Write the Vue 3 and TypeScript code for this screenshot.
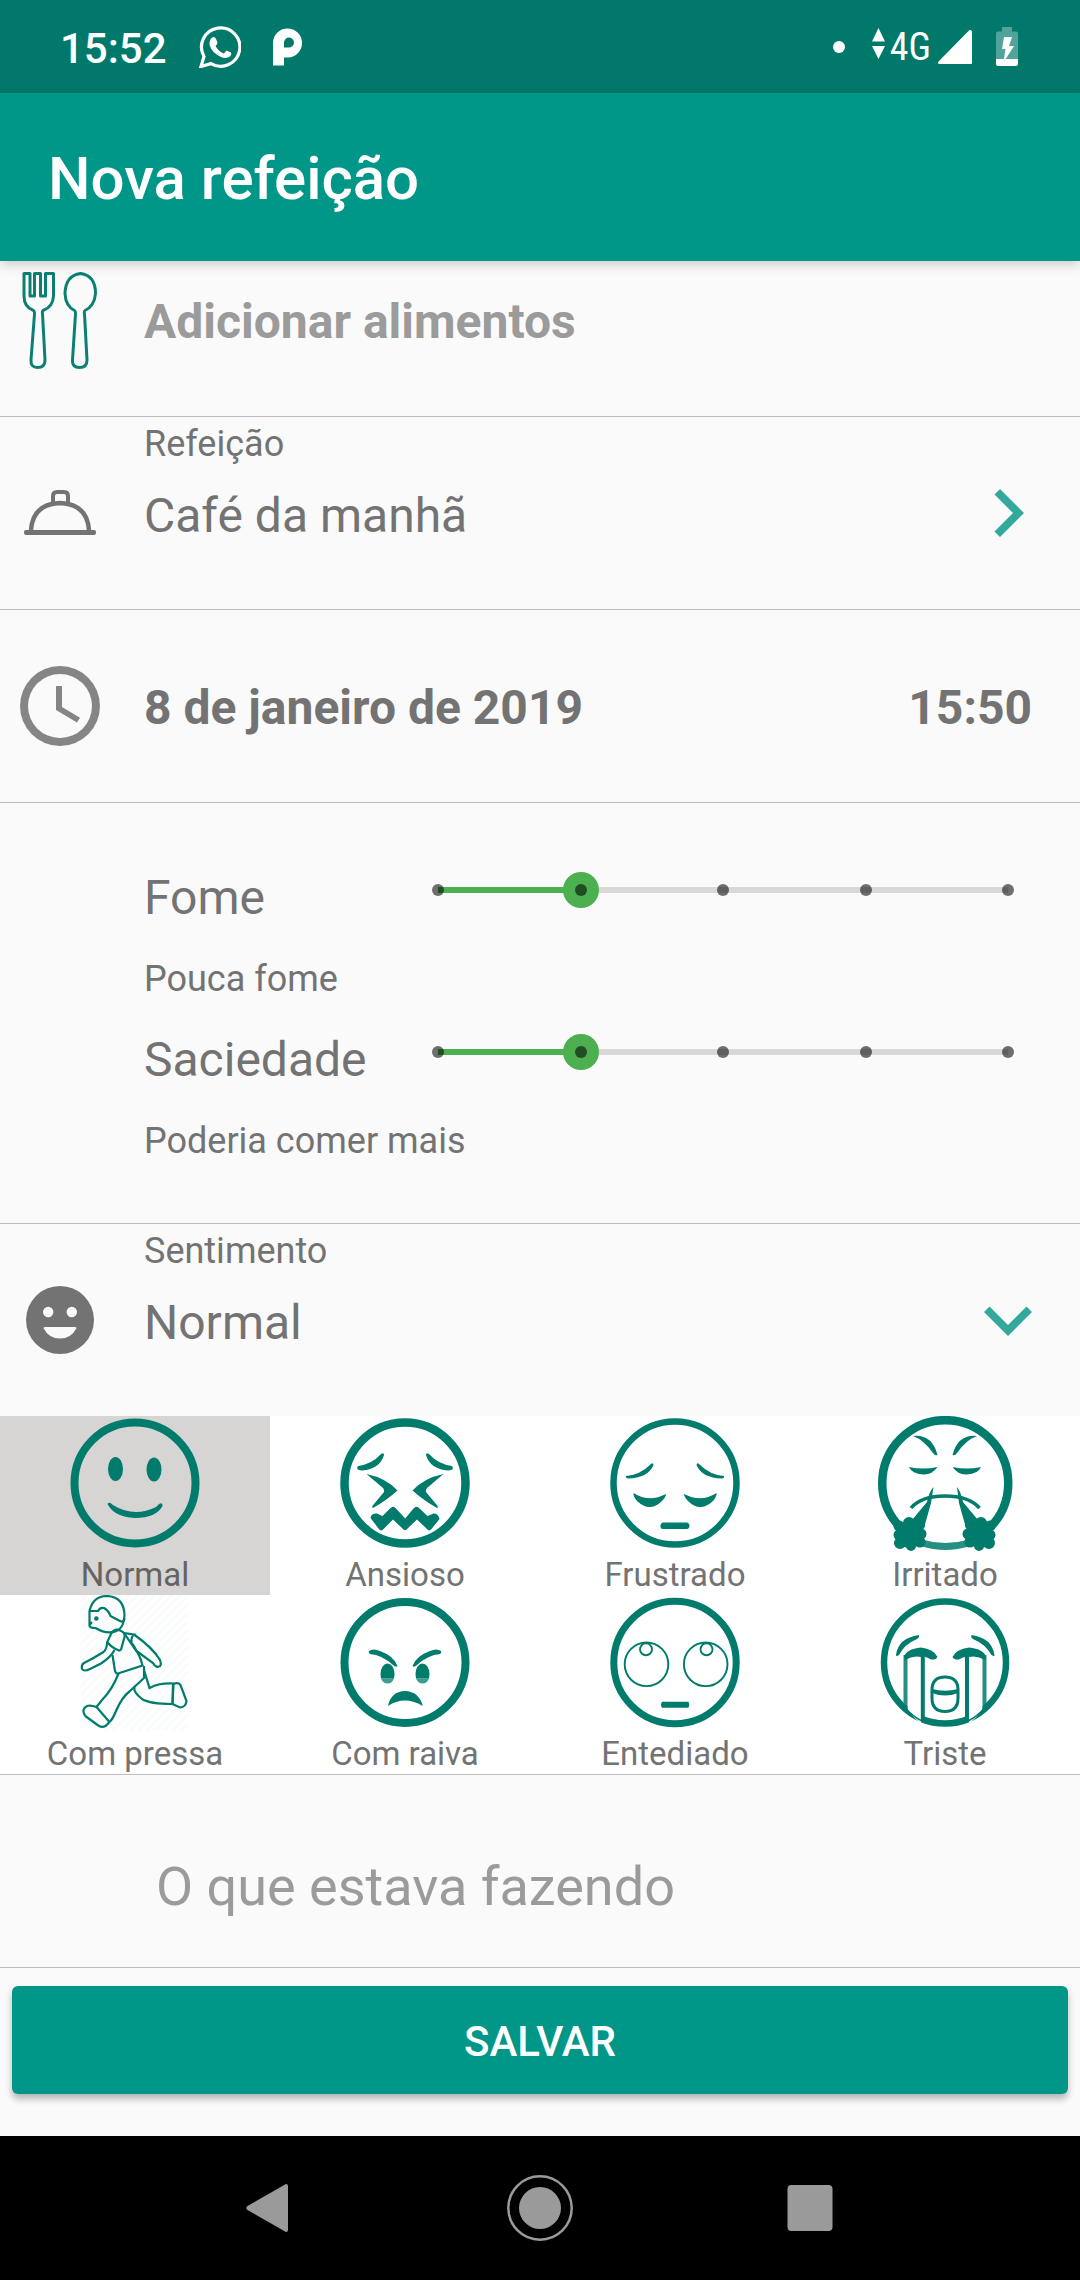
<script setup lang="ts">
import { computed, ref } from 'vue'

interface Shape {
  d: string
  /** Stroke width; the shape is filled when it is left out. */
  w?: number
  color?: string
  opacity?: number
}

interface Mood {
  id: string
  label: string
  hatched?: boolean
  shapes: Shape[]
}

const oval = (cx: number, cy: number, rx: number, ry: number = rx): string =>
  `M${cx - rx} ${cy}a${rx} ${ry} 0 1 0 ${2 * rx} 0a${rx} ${ry} 0 1 0 ${-2 * rx} 0Z`

const moods: Mood[] = [
  {
    id: 'normal',
    label: 'Normal',
    shapes: [
      { d: oval(67, 67, 60.5), w: 8 },
      { d: oval(47.5, 53, 7.5, 12) },
      { d: oval(86, 53.5, 7.5, 12) },
      { d: 'M39.5 88Q41 85 45 89Q66 102 88 91L91 88Q95 86 94.5 90Q88 102 67 102Q46 101 39.5 88Z' },
    ],
  },
  {
    id: 'ansioso',
    label: 'Ansioso',
    shapes: [
      { d: oval(67, 67, 60.5), w: 8.5 },
      { d: 'M20 50Q34 48 43 38Q46 36 46 39Q42 53 24 54.5Q17 54 20 50Z' },
      { d: 'M114 50Q100 48 91 38Q88 36 88 39Q92 53 110 54.5Q117 54 114 50Z' },
      { d: 'M28.5 58Q48 62 59.5 74.5Q49 84 35 92Q33 91 36 88L46 76Q47 74.5 45 72Z' },
      { d: 'M105.5 58Q86 62 74.5 74.5Q85 84 99 92Q101 91 98 88L88 76Q87 74.5 89 72Z' },
      { d: 'M32.5 102Q33 97 39 97.5L44.5 100L52 92.5Q55 89 58 92.5L67.2 102.5L75.5 92.5Q78.500 89 82 93L89.5 100L95.5 97.5Q100 97 101.500 103L93.5 113Q91 116 88.5 112.5L79 103.5L69.5 112.5Q67 116 64.5 112.5L55 103.5L45.5 113Q43 116 40.5 112.5Z' },
    ],
  },
  {
    id: 'frustrado',
    label: 'Frustrado',
    shapes: [
      { d: oval(67, 67, 61.5), w: 6.5 },
      { d: 'M18 60Q32 59 43 48Q45 46 45.500 49Q40 62 20 62.5Q17 61.500 18 60Z' },
      { d: 'M116 60Q102 59 91 48Q89 46 88.500 49Q94 62 114 62.5Q117 61.500 116 60Z' },
      { d: 'M25.5 77Q41 87 58 78Q58 81 54 85Q42 97 29 85Q25 80 25.5 77Z' },
      { d: 'M108.5 77Q93 87 76 78Q76 81 80 85Q92 97 105 85Q109 80 108.5 77Z' },
      { d: 'M55 106.5H79Q81.5 107 81.5 110Q81 113 79 113H55Q52 113 52.5 110Q52.5 107 55 106.5Z' },
    ],
  },
  {
    id: 'irritado',
    label: 'Irritado',
    shapes: [
      { d: 'M22.5 111.5A63 63 0 1 1 112 111.5', w: 8.5 },
      { d: 'M44 127Q67 134 91 127', w: 7, opacity: 0.85 },
      { d: 'M35 20Q54 18 59.5 39Q57 40 55 37Q46 24 35 20Z' },
      { d: 'M99 20Q80 18 74.5 39Q77 40 79 37Q88 24 99 20Z' },
      { d: 'M31 51Q45 54 59.5 51Q54 59 45 58.5Q34 58 31 51Z' },
      { d: 'M103 51Q89 54 74.5 51Q80 59 89 58.5Q100 58 103 51Z' },
      { d: 'M33 92Q43 80 67 80Q91 80 101.5 92', w: 3.5 },
      { d: 'M55.5 71Q51 76 49 86L34 104L46 112L53 87Z' },
      { d: 'M79 71Q83 76 85 86L100 104L88 112L81 87Z' },
      { d: oval(32, 119, 14, 13) + oval(31, 107, 6) + oval(41, 109, 6) + oval(21, 110, 5.5) + oval(21, 119, 5.5) + oval(22, 127, 6) + oval(33, 130, 5) + oval(42, 126, 5.5) + oval(43, 118, 5.5) },
      { d: oval(102, 119, 14, 13) + oval(103, 107, 6) + oval(93, 109, 6) + oval(112, 110, 5.5) + oval(112, 119, 5.5) + oval(111, 127, 6) + oval(101, 130, 5) + oval(92, 126, 5.5) + oval(90, 118, 5.5) },
    ],
  },
  {
    id: 'pressa',
    label: 'Com pressa',
    hatched: true,
    shapes: [
      { d: 'M21.5 30L21.5 16Q25 1 39 1Q56 2 56.5 20Q56 33 48.5 36Q39 40 27.5 33Q21 33 21.5 30L24 27', w: 2.2 },
      { d: 'M21.5 16H30Q32 12 36 13Q41 16 42.5 21Q48 24 53 26.5Q56 27 56.5 23', w: 2.2 },
      { d: oval(28.3, 23.5, 2.3) },
      { d: 'M43.5 38Q47 33 52 35.5Q58 38 56.5 42L54 51Q53 56 51 55.5Q44 53 39.2 47Z', w: 2.2 },
      { d: 'M39.2 47Q39 54 35.5 57Q26 63 16 68Q13 70 14 74Q16 77 22 74L33 68.5Q43 62 46.5 55', w: 2.2 },
      { d: 'M44.5 60L46.5 73Q47 79 50 78.5L74.5 70.5Q72 60 67 54L56 38Q62 39 66 39.5Q63 42 63.5 47', w: 2.2 },
      { d: 'M66 39.5Q85 53 92 65Q94 71 91 71.5Q88 73 85 68L68.5 56Q66 50 62 46', w: 2.2 },
      { d: 'M50.6 78.5Q44 95 34 105L28.5 112Q18 108 15.5 115Q15 120 20 123L31 131Q36 134 41 127.5Q45 124 48 116Q54 102 62 96L76 83V71', w: 2.2 },
      { d: 'M28.5 112L41 126.5', w: 2.2 },
      { d: 'M76 75L81.5 93Q90 88 105 88.5L104.5 109Q82 109 74 104Q65 97 66.5 92', w: 2.2 },
      { d: 'M105.5 89Q110 87 112.5 90L118.500 106Q118 112 112 112.5L104.5 109Z', w: 2.2 },
    ],
  },
  {
    id: 'raiva',
    label: 'Com raiva',
    shapes: [
      { d: oval(67, 67.5, 60.5), w: 8 },
      { d: 'M31 56Q35 53 42 56Q56 61 59.5 71Q58 73 55 70Q44 60 32 59Q30 58 31 56Z' },
      { d: 'M103 56Q99 53 92 56Q78 61 74.5 71Q76 73 79 70Q90 60 102 59Q104 58 103 56Z' },
      { d: 'M42.5 79A7 10.5 0 0 1 56.5 79L56 83.500H43Z' },
      { d: 'M77.5 79A7 10.5 0 0 1 91.5 79L91 83.500H78Z' },
      { d: 'M43 83.5H56Q54 88.5 49.5 88.5Q45 88.5 43 83.5Z', opacity: 0.75 },
      { d: 'M78 83.5H91Q89 88.5 84.5 88.5Q80 88.5 78 83.5Z', opacity: 0.75 },
      { d: 'M50 111Q53 96.5 67 96Q81 96.5 84.7 111Q76 105.5 67 105.5Q58 105.5 50 111Z' },
    ],
  },
  {
    id: 'entediado',
    label: 'Entediado',
    shapes: [
      { d: oval(67, 67.5, 61.2), w: 7 },
      { d: oval(38.5, 69.3, 21.8), w: 1.9 },
      { d: oval(97.7, 69.3, 21.8), w: 1.9 },
      { d: oval(38, 54.3, 6), w: 1.9 },
      { d: oval(98.5, 54.3, 6), w: 1.9 },
      { d: 'M54 106.7H80.5Q82 110 80.5 112.7H54Q52 110 54 106.7Z' },
    ],
  },
  {
    id: 'triste',
    label: 'Triste',
    shapes: [
      { d: oval(67, 67.5, 61), w: 6.5 },
      { d: 'M29.5 64H43V128Q34 122 29.5 114Z', color: '#fff' },
      { d: 'M104.5 64H91V128Q100 122 104.5 114Z', color: '#fff' },
      { d: 'M27.5 113Q34 121 44 126M106.5 113Q100 121 90 126', w: 1.5 },
      { d: 'M27.5 60V115M106.5 60V115', w: 4, opacity: 0.85 },
      { d: 'M44.8 60V124M89 60V124', w: 4 },
      { d: 'M18 60Q20 43 41 40Q42 43 37 45Q27 49 21 60Q18 62 18 60Z' },
      { d: 'M116.5 60Q114 43 93.5 40Q92 43 97 45Q107 49 113.5 60Q117 62 116.5 60Z' },
      { d: 'M26 62Q28 54 43 52.500Q56 54 59.5 62Q58 65 53 64.5Q48 61 43 62Q35 60 27 65Z' },
      { d: 'M108 62Q106 54 91 52.500Q78 54 74.5 62Q76 65 81 64.5Q86 61 91 62Q99 60 107 65Z' },
      { d: 'M54 95Q54 82 67 82Q80 82 80 95V103Q80 116.5 67 116.5Q54 116.5 54 103Z', w: 3 },
      { d: 'M54 94Q67 97.5 80 94V98Q67 103 54 98Z' },
    ],
  },
]

const hungerNotes = ['Sem fome', 'Pouca fome', 'Com fome', 'Muita fome', 'Faminto']
const fullnessNotes = ['Insatisfeito', 'Poderia comer mais', 'Satisfeito', 'Cheio', 'Muito cheio']

const hunger = ref(1)
const fullness = ref(1)
const mood = ref('normal')
const moodsOpen = ref(true)
const activity = ref('')

const moodLabel = computed(() => moods.find((m) => m.id === mood.value)?.label ?? '')
</script>

<template>
  <div class="screen">
    <div class="status">
      <span class="clock">15:52</span>
      <svg width="42" height="42" viewBox="0 0 42 42" aria-hidden="true">
        <path d="M2 40.5L5 30.5A19.2 19.2 0 1 1 12 37.6Z" fill="none" stroke="#fff" stroke-width="3.2" />
        <path d="M14 11Q16 10.5 17 13L18.5 16.5Q18.5 18 16.5 20Q20 26 25 27.5L27.5 24.5L32 26.5Q33 28 31 30.5Q27 33 22 31Q13 27 10.5 19Q10 13 14 11Z" fill="#fff" />
      </svg>
      <svg width="30" height="38" viewBox="0 0 30 38" aria-hidden="true">
        <path fill-rule="evenodd" d="M0 37.5V15A14.5 14.5 0 1 1 15 29.5H11V37.5ZM11 19.5V14.500A5 5 0 1 1 15.5 19.5Z" fill="#fff" />
      </svg>
      <div class="status-end">
        <svg width="12" height="12" viewBox="0 0 12 12" aria-hidden="true"><circle cx="6" cy="6" r="6" fill="#fff" /></svg>
        <svg class="arrows" width="13" height="31" viewBox="0 0 13 31" aria-hidden="true"><path d="M6.5 0L13 13.500H0ZM0 18H13L6.5 31Z" fill="#fff" /></svg>
        <span class="network">4G</span>
        <svg class="signal" width="34" height="34" viewBox="0 0 34 34" aria-hidden="true"><path d="M32 0Q34 0 34 2V33Q34 34 33 34H1Q-1 33 1 31L30.5 1Q31 0 32 0Z" fill="#fff" /></svg>
        <svg width="22" height="39" viewBox="0 0 22 39" aria-hidden="true">
          <path d="M6 0H16V4.5H20Q22 4.5 22 6.5V32H0V6.5Q0 4.5 2 4.5H6Z" fill="#fff" opacity=".32" />
          <path d="M0 32H22V37Q22 39 20 39H2Q0 39 0 37ZM8 10H16L13 19H18L9 33L8 32L9.5 22H6Z" fill="#fff" />
        </svg>
      </div>
    </div>

    <header class="app-bar"><h1>Nova refeição</h1></header>

    <main>
      <button type="button" class="row foods">
        <span class="icon">
          <svg width="76" height="98" viewBox="0 0 76 98" fill="none" stroke="#0b8072" stroke-width="3" stroke-linejoin="round" aria-hidden="true">
            <path d="M2 1.5H8V24H12.500V1.5H18.500V24H23.500V1.5H31.500V24Q31 35 21 38.500Q20 39 20.500 42L23 88Q23 95.500 15.500 95.500Q8.500 95.500 9 88L12.500 42Q12.500 39 11.500 38.500Q2 35 2 24Z" />
            <path d="M58.500 1.5Q73.500 3.500 73.500 21.500Q72.500 34 63 38.500Q62 39 62.500 42L65 88Q65 95.500 57.500 95.500Q50 95.500 50.500 88L53.500 42Q53.500 39 52.500 38.500Q43.500 34 43 21.500Q43.500 3.500 58.500 1.5Z" />
          </svg>
        </span>
        <span class="value strong hint">Adicionar alimentos</span>
      </button>

      <button type="button" class="row">
        <span class="icon">
          <svg width="72" height="46" viewBox="0 0 72 46" aria-hidden="true">
            <path d="M7 40Q9 14 36 13Q63 14 65 40" fill="none" stroke="#737373" stroke-width="4.5" />
            <path d="M29 13V6Q29 2 33 2H40Q44 2 44 6V13" fill="none" stroke="#737373" stroke-width="4" />
            <rect y="40" width="72" height="5" rx="2" fill="#737373" />
          </svg>
        </span>
        <span class="stack">
          <span class="caption">Refeição</span>
          <span class="value">Café da manhã</span>
        </span>
        <svg class="chevron" width="72" height="72" viewBox="0 0 72 72" aria-hidden="true"><path d="M28 12L52 36L28 60L22.5 54.5L41 36L22.5 17.5Z" /></svg>
      </button>

      <div class="row">
        <span class="icon">
          <svg width="96" height="96" viewBox="0 0 24 24" fill="#858585" aria-hidden="true">
            <path d="M12 2a10 10 0 1 0 0 20a10 10 0 1 0 0-20ZM12 20a8 8 0 1 1 0-16a8 8 0 1 1 0 16Z" />
            <path d="M12.5 7H11v6l5.250 3.150.75-1.230-4.500-2.670z" />
          </svg>
        </span>
        <button type="button" class="value strong">8 de janeiro de 2019</button>
        <button type="button" class="value strong time">15:50</button>
      </div>

      <section class="levels">
        <div class="level">
          <label class="value name" for="hunger">Fome</label>
          <span class="slider">
            <input id="hunger" v-model.number="hunger" type="range" min="0" max="4" :style="{ '--level': hunger / 4 }" />
            <span class="ticks"><i v-for="n in 5" :key="n"></i></span>
          </span>
          <output class="caption" for="hunger">{{ hungerNotes[hunger] }}</output>
        </div>
        <div class="level">
          <label class="value name" for="fullness">Saciedade</label>
          <span class="slider">
            <input id="fullness" v-model.number="fullness" type="range" min="0" max="4" :style="{ '--level': fullness / 4 }" />
            <span class="ticks"><i v-for="n in 5" :key="n"></i></span>
          </span>
          <output class="caption" for="fullness">{{ fullnessNotes[fullness] }}</output>
        </div>
      </section>

      <section class="feeling">
        <button type="button" class="row plain" :aria-expanded="moodsOpen" @click="moodsOpen = !moodsOpen">
          <span class="icon">
            <svg width="68" height="68" viewBox="0 0 68 68" aria-hidden="true">
              <circle cx="34" cy="34" r="34" fill="#737373" />
              <path d="M17 26a5.2 5.2 0 1 0 10.4 0a5.2 5.2 0 1 0-10.4 0ZM40.6 26a5.2 5.2 0 1 0 10.4 0a5.2 5.2 0 1 0-10.4 0ZM19 41H49Q51 41 50 43Q45 52.5 34 52.5Q23 52.5 18 43Q17 41 19 41Z" fill="#fafafa" />
            </svg>
          </span>
          <span class="stack">
            <span class="caption">Sentimento</span>
            <span class="value">{{ moodLabel }}</span>
          </span>
          <svg class="chevron" width="72" height="72" viewBox="0 0 72 72" aria-hidden="true"><path d="M12 28L17.5 22.5L36 41L54.5 22.5L60 28L36 52Z" /></svg>
        </button>

        <div v-if="moodsOpen" class="moods" role="radiogroup" aria-label="Sentimento">
          <label v-for="m in moods" :key="m.id" class="mood" :class="{ chosen: m.id === mood }">
            <input v-model="mood" type="radio" name="mood" :value="m.id" />
            <svg width="135" height="135" viewBox="0 0 135 135" aria-hidden="true">
              <template v-if="m.hatched">
                <defs>
                  <pattern id="hatch" width="6" height="6" patternUnits="userSpaceOnUse" patternTransform="rotate(45)">
                    <rect width="3" height="6" fill="#fafcfc" />
                  </pattern>
                </defs>
                <rect x="13" width="107" height="135" fill="url(#hatch)" />
              </template>
              <path
                v-for="(s, i) in m.shapes"
                :key="i"
                :d="s.d"
                :fill="s.w ? 'none' : (s.color ?? '#007b6c')"
                :stroke="s.w ? '#007b6c' : 'none'"
                :stroke-width="s.w"
                :opacity="s.opacity"
              />
            </svg>
            <span class="mood-name">{{ m.label }}</span>
          </label>
        </div>
      </section>

      <div class="activity">
        <input v-model="activity" type="text" placeholder="O que estava fazendo" aria-label="O que estava fazendo" />
      </div>

      <button type="button" class="save">SALVAR</button>
    </main>

    <nav class="system-nav">
      <button type="button" aria-label="Voltar">
        <svg width="48" height="48" viewBox="0 0 48 48"><path d="M40 0Q42 0 42 2V46Q42 48 40 48L1.5 26Q-1 24 1.5 22Z" /></svg>
      </button>
      <button type="button" aria-label="Início">
        <svg width="66" height="66" viewBox="0 0 66 66"><circle cx="33" cy="33" r="21" /><circle cx="33" cy="33" r="31.7" fill="none" stroke="#9a9a9a" stroke-width="2.5" /></svg>
      </button>
      <button type="button" aria-label="Recentes">
        <svg width="46" height="46" viewBox="0 0 46 46"><rect x="0.5" width="45" height="46" rx="4" /></svg>
      </button>
    </nav>
  </div>
</template>

<style>
body {
  margin: 0;
  background: #fafafa;
}
</style>

<style scoped>
* {
  box-sizing: border-box;
}

.screen {
  display: flex;
  flex-direction: column;
  min-height: 100vh;
  background: #fafafa;
  color: #737373;
  font-family: Roboto, "Noto Sans", sans-serif;
  font-size: 36px;
}

button,
input {
  border: 0;
  margin: 0;
  padding: 0;
  background: none;
  color: inherit;
  font: inherit;
  text-align: left;
}

button {
  cursor: pointer;
}

svg {
  display: block;
  flex: none;
}

.status {
  display: flex;
  align-items: center;
  gap: 32px;
  height: 93px;
  padding: 0 62px 0 60px;
  background: #00796b;
  color: #fff;
}

.clock {
  font-size: 42px;
  font-weight: 500;
  line-height: 48px;
  padding-top: 4px;
}

.status-end {
  display: flex;
  align-items: center;
  margin-left: auto;
}

.arrows {
  margin: 0 5px 6px 27px;
}

.network {
  font-family: "Roboto Condensed", "Liberation Sans Narrow", Roboto, sans-serif;
  font-size: 38px;
  line-height: 44px;
}

.signal {
  margin: 0 24px 0 7px;
}

.app-bar {
  position: relative;
  display: flex;
  align-items: center;
  height: 168px;
  padding: 4px 48px 0;
  background: #009688;
  box-shadow: 0 3px 12px rgba(0, 0, 0, 0.2);
  color: #fff;
}

h1 {
  margin: 0;
  font-size: 60px;
  font-weight: 500;
  line-height: 70px;
}

main {
  display: flex;
  flex-direction: column;
}

.row {
  display: flex;
  align-items: center;
  width: 100%;
  height: 193px;
  border-bottom: 1px solid #bdbdbd;
}

.foods {
  height: 156px;
  padding-bottom: 36px;
}

.plain {
  height: 192px;
  border-bottom: 0;
}

.icon {
  display: flex;
  flex: none;
  justify-content: center;
  width: 120px;
  margin-right: 24px;
}

.value {
  font-size: 48px;
  line-height: 56px;
  padding-top: 3px;
}

.strong {
  font-weight: 700;
}

.hint {
  color: #9b9b9b;
}

.time {
  margin-left: auto;
  padding-right: 48px;
}

.stack {
  display: flex;
  flex: 1;
  flex-direction: column;
  align-self: flex-start;
  gap: 20px;
  padding-top: 6px;
}

.caption {
  font-size: 36px;
  line-height: 42px;
}

.chevron {
  margin-right: 36px;
  fill: #33a99d;
}

.levels {
  display: flex;
  flex-direction: column;
  gap: 32px;
  padding: 67px 54px 61px 144px;
  border-bottom: 1px solid #bdbdbd;
}

.level {
  display: grid;
  grid-template-columns: 276px 1fr;
  row-gap: 32px;
}

.level .name {
  padding-top: 0;
}

.level .caption {
  grid-column: 1 / -1;
}

.slider {
  position: relative;
  display: flex;
  align-items: center;
  height: 40px;
}

.slider input {
  appearance: none;
  flex: 1;
  min-width: 0;
  height: 36px;
  background:
    linear-gradient(#4caf50, #4caf50) 18px center / calc((100% - 36px) * var(--level)) 6px no-repeat,
    linear-gradient(#d8d8d8, #d8d8d8) center / calc(100% - 36px) 6px no-repeat;
}

.slider input::-webkit-slider-thumb {
  appearance: none;
  width: 36px;
  height: 36px;
  border-radius: 50%;
  background: #4caf50;
}

.ticks {
  position: absolute;
  inset: 0 12px;
  display: flex;
  align-items: center;
  justify-content: space-between;
  pointer-events: none;
}

.ticks i {
  width: 12px;
  height: 12px;
  border-radius: 50%;
  background: rgba(0, 0, 0, 0.56);
}

.feeling {
  border-bottom: 1px solid #bdbdbd;
}

.moods {
  display: grid;
  grid-template-columns: repeat(4, 1fr);
  background: #fff;
}

.mood {
  position: relative;
  display: flex;
  flex-direction: column;
  align-items: center;
  height: 179px;
  cursor: pointer;
}

.mood input {
  position: absolute;
  inset: 0;
  opacity: 0;
}

.chosen {
  background: #d6d5d3;
  color: #656463;
}

.mood-name {
  padding-top: 3px;
  font-size: 33px;
  line-height: 41px;
}

.activity {
  display: flex;
  height: 193px;
  padding: 30px 36px 0 144px;
  border-bottom: 1px solid #bdbdbd;
}

.activity input {
  flex: 1;
  min-width: 0;
  padding: 0 12px;
  font-size: 54px;
}

.activity input::placeholder {
  color: #9b9b9b;
  opacity: 1;
}

.save {
  height: 108px;
  margin: 18px 12px 42px;
  padding-top: 3px;
  border-radius: 6px;
  background: #009688;
  box-shadow: 0 5px 7px rgba(0, 0, 0, 0.28);
  color: #fff;
  font-size: 42px;
  font-weight: 500;
  text-align: center;
}

.system-nav {
  display: grid;
  grid-template-columns: repeat(3, 1fr);
  height: 144px;
  margin-top: auto;
  padding: 0 12.5%;
  background: #000;
}

.system-nav button {
  display: flex;
  align-items: center;
  justify-content: center;
}

.system-nav svg {
  fill: #9a9a9a;
}
</style>
